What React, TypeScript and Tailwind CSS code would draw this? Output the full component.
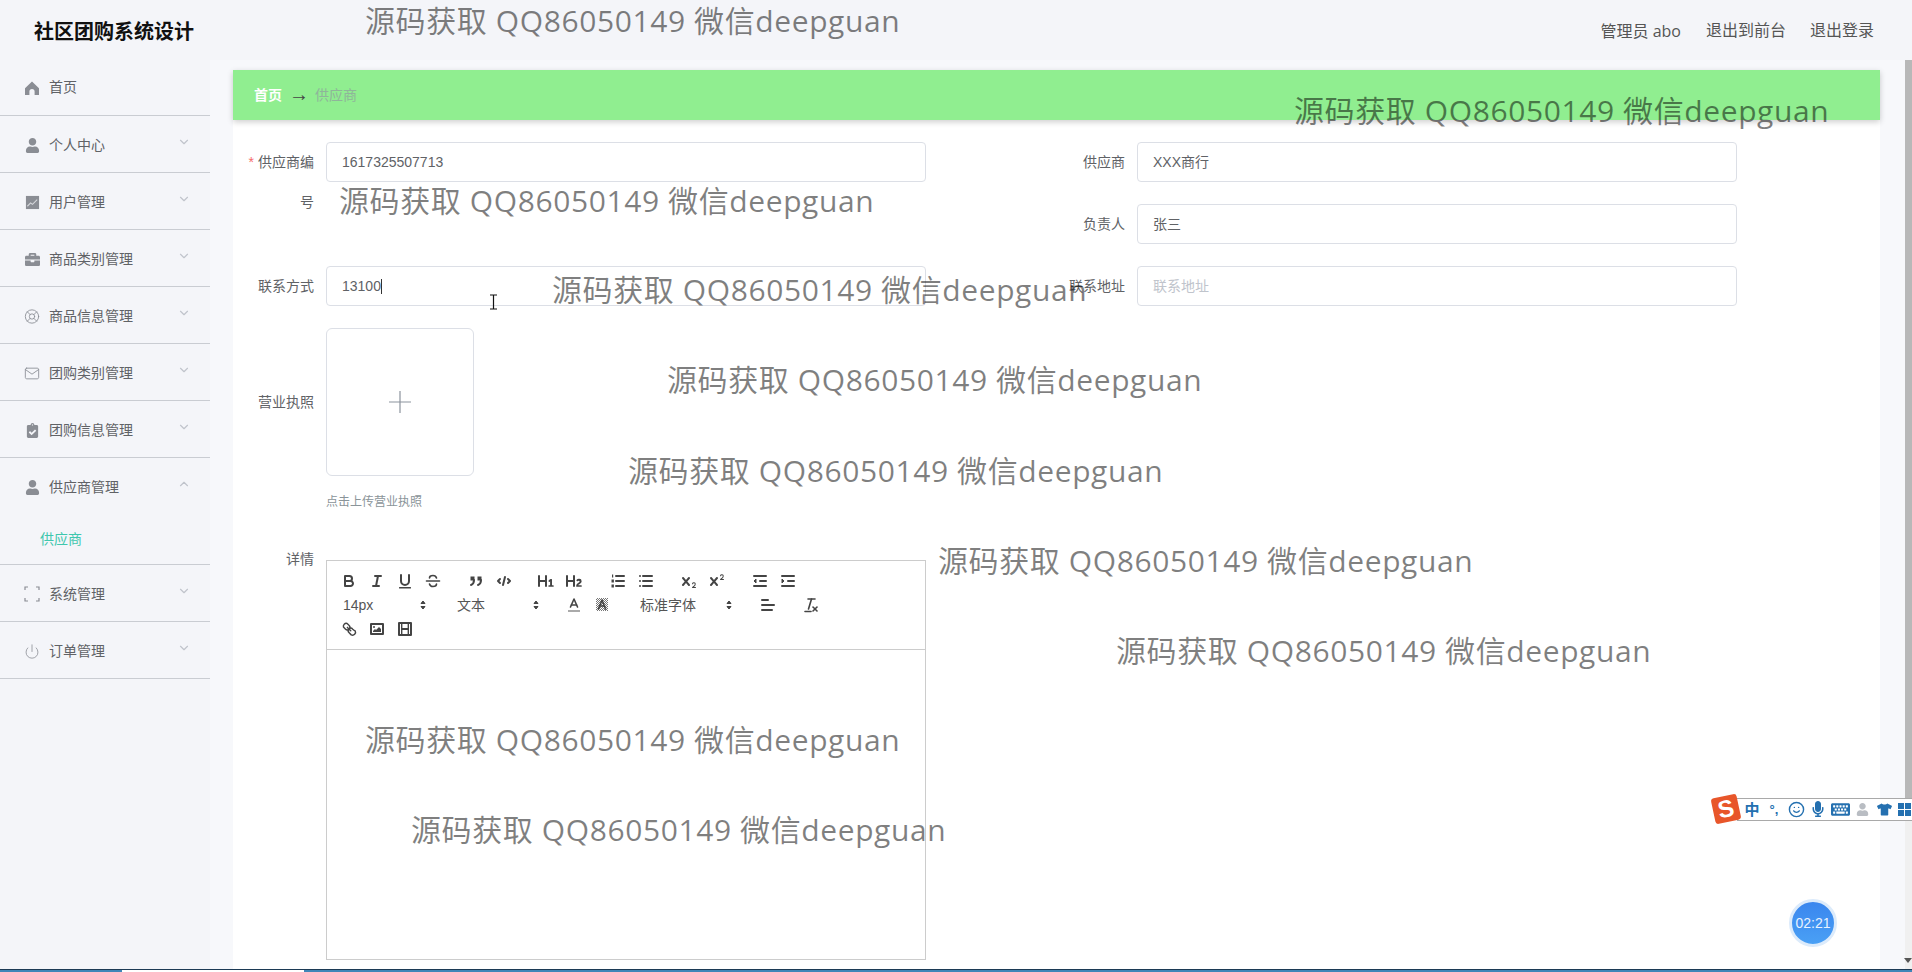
import type { ReactNode } from 'react';
import { LifeBuoy, Smile } from 'lucide-react';
import { FaBriefcase, FaClipboardCheck, FaKeyboard, FaMicrophone, FaTshirt, FaUser } from 'react-icons/fa';
import { FiChevronDown, FiChevronUp, FiMail, FiPower } from 'react-icons/fi';

const font = "font-['Liberation_Sans','Noto_Sans_CJK_SC',sans-serif]";

const watermarks = [
  'left-[365px] top-[0px]',
  'left-[1294px] top-[90px]',
  'left-[339px] top-[180px]',
  'left-[552px] top-[269px]',
  'left-[667px] top-[359px]',
  'left-[628px] top-[450px]',
  'left-[938px] top-[540px]',
  'left-[1116px] top-[630px]',
  'left-[365px] top-[719px]',
  'left-[411px] top-[809px]',
];

function Corners() {
  return (
    <svg viewBox="0 0 16 16" className="h-[16px] w-[16px]" fill="none" stroke="#8a8d94" strokeWidth="1.2">
      <path d="M1 4V1h3M12 1h3v3M1 12v3h3M15 12v3h-3" />
    </svg>
  );
}

function HomeIcon() {
  return (
    <svg viewBox="0 0 16 16" className="h-[16px] w-[16px]" fill="#8a8d94">
      <path d="M8 1.5 15 8.2V15h-4.4v-3.4a2.6 2.6 0 0 0-5.2 0V15H1V8.2Z" />
    </svg>
  );
}

function ChartIcon() {
  return (
    <svg viewBox="0 0 16 16" className="h-[15px] w-[15px]">
      <rect x="1" y="1" width="14" height="14" fill="#8a8d94" />
      <path d="M2.5 12 6 8.5l2 1.5 5-5" fill="none" stroke="#d5d7db" strokeWidth="1.2" />
    </svg>
  );
}

const menu: Array<[string, ReactNode]> = [
  ['个人中心', <FaUser size={15} />],
  ['用户管理', <ChartIcon />],
  ['商品类别管理', <FaBriefcase size={15} />],
  ['商品信息管理', <LifeBuoy size={17} strokeWidth={1.3} />],
  ['团购类别管理', <FiMail size={17} strokeWidth={1.3} />],
  ['团购信息管理', <FaClipboardCheck size={15} />],
];

const menuAfter: Array<[string, ReactNode]> = [
  ['系统管理', <Corners />],
  ['订单管理', <FiPower size={17} strokeWidth={1.2} />],
];

function MenuRow({ label, icon, open }: { label: string; icon: ReactNode; open?: boolean }) {
  return (
    <div className="flex h-[56px] items-center pl-[24px] pr-[19px] pt-[2px] text-[#606266]">
      <span className="flex w-[16px] justify-center text-[#8a8d94]">{icon}</span>
      <span className="ml-[9px] flex-1 text-[14px]">{label}</span>
      <span className="-mt-[7px] text-[#c0c4cc]">{open ? <FiChevronUp size={14} /> : <FiChevronDown size={14} />}</span>
    </div>
  );
}

function Sidebar() {
  return (
    <aside className="w-[210px] shrink-0">
      <div className="flex h-[58px] items-center border-b border-[#c9ccd2] pl-[24px] pt-[2px] text-[#606266]">
        <HomeIcon />
        <span className="ml-[9px] text-[14px]">首页</span>
      </div>
      {menu.map(([label, icon]) => (
        <div className="border-b border-[#c9ccd2]" key={label}>
          <MenuRow label={label} icon={icon} />
        </div>
      ))}
      <div className="border-b border-[#c9ccd2]">
        <MenuRow label="供应商管理" icon={<FaUser size={15} />} open />
        <div className="flex h-[50px] items-center pl-[40px] text-[14px] text-[#3fc7ae]">供应商</div>
      </div>
      {menuAfter.map(([label, icon]) => (
        <div className="border-b border-[#c9ccd2]" key={label}>
          <MenuRow label={label} icon={icon} />
        </div>
      ))}
    </aside>
  );
}

function Field({ label, value, placeholder, required, caret }: { label: string; value?: string; placeholder?: string; required?: boolean; caret?: boolean }) {
  return (
    <div className="flex">
      <label className="w-[80px] shrink-0 pr-[12px] text-right text-[14px] leading-[40px] text-[#606266]">
        {required && <span className="mr-[4px] text-[#f56c6c]">*</span>}
        {label}
      </label>
      <div className="flex h-[40px] w-[600px] items-center rounded-[4px] border border-[#dcdfe6] bg-white px-[15px] text-[14px] text-[#606266]">
        {value}
        {caret && <span className="h-[15px] w-px bg-[#333]" />}
        {placeholder && <span className="text-[#c0c4cc]">{placeholder}</span>}
      </div>
    </div>
  );
}

const stroke = { fill: 'none', stroke: '#444', strokeWidth: 2, strokeLinecap: 'round' as const, strokeLinejoin: 'round' as const };

function Q({ children }: { children: ReactNode }) {
  return (
    <span className="flex h-[24px] w-[28px] shrink-0 items-center justify-center">
      <svg viewBox="0 0 18 18" className="h-[18px] w-[18px]">{children}</svg>
    </span>
  );
}

function Picker({ label, width }: { label: string; width: string }) {
  return (
    <span className={`relative flex h-[24px] shrink-0 items-center pl-[8px] text-[14px] text-[#555] ${width}`}>
      {label}
      <svg viewBox="0 0 18 18" className="absolute right-[2px] top-[3px] h-[18px] w-[18px]" fill="#444" stroke="#444" strokeWidth="1" strokeLinejoin="round">
        <polygon points="7 10.5 9 13 11 10.5" />
        <polygon points="7 7.5 9 5 11 7.5" />
      </svg>
    </span>
  );
}

function Toolbar() {
  return (
    <div className="h-[89px] border-b border-[#ccc] px-[8px] pt-[8px]">
      <div className="flex">
        <Q><g {...stroke}><path d="M5,4H9.5A2.5,2.5,0,0,1,12,6.5v0A2.5,2.5,0,0,1,9.5,9H5V4Z" /><path d="M5,9h5.5A2.5,2.5,0,0,1,13,11.5v0A2.5,2.5,0,0,1,10.5,14H5V9Z" /></g></Q>
        <Q><g {...stroke}><line x1="7" x2="13" y1="4" y2="4" /><line x1="5" x2="11" y1="14" y2="14" /><line x1="8" x2="10" y1="14" y2="4" /></g></Q>
        <Q><path d="M5,3V9a4,4,0,0,0,8,0V3" {...stroke} /><rect height="1.6" rx=".5" width="12" x="3" y="15" fill="#444" /></Q>
        <Q><g {...stroke} strokeWidth="1.6"><line x1="2.5" x2="15.5" y1="9" y2="9" /><path d="M12.5 6C12 4 10.5 3.5 9 3.5 7 3.5 5.5 4.5 5.5 6M5.5 12c.5 2 2 2.5 3.5 2.5 2 0 3.5-1 3.5-2.5" /></g></Q>
        <span className="w-[15px]" />
        <Q><rect height="3" width="3" x="4" y="5" fill="#444" stroke="#444" /><rect height="3" width="3" x="11" y="5" fill="#444" stroke="#444" /><path d="M7,8c0,4-3,5-3,5" {...stroke} /><path d="M14,8c0,4-3,5-3,5" {...stroke} /></Q>
        <Q><g {...stroke}><polyline points="5 7 3 9 5 11" /><polyline points="13 7 15 9 13 11" /><line x1="10" x2="8" y1="5" y2="13" /></g></Q>
        <span className="w-[14px]" />
        <Q><path fill="#444" d="M10,4V14a1,1,0,0,1-2,0V10H3v4a1,1,0,0,1-2,0V4A1,1,0,0,1,3,4V8H8V4a1,1,0,0,1,2,0Zm6.06787,9.209H14.98975V7.59863a.54085.54085,0,0,0-.605-.60547h-.62744a1.01119,1.01119,0,0,0-.748.29688L11.645,8.56641a.5435.5435,0,0,0-.022.8584l.28613.30762a.53861.53861,0,0,0,.84717.0332l.09912-.08789a1.2137,1.2137,0,0,0,.2417-.35254h.02246s-.01123.30859-.01123.60547V13.209H12.041a.54085.54085,0,0,0-.605.60547v.43945a.54085.54085,0,0,0,.605.60547h4.02686a.54085.54085,0,0,0,.605-.60547v-.43945A.54085.54085,0,0,0,16.06787,13.209Z" /></Q>
        <Q><path fill="#444" d="M16.73975,13.81445v.43945a.54085.54085,0,0,1-.605.60547H11.855a.58392.58392,0,0,1-.64893-.60547V14.0127c0-2.90527,3.39941-3.42187,3.39941-4.55469a.77675.77675,0,0,0-.84717-.78125,1.17684,1.17684,0,0,0-.83594.38477c-.2749.26367-.561.374-.85791.13184l-.4292-.34082c-.30811-.24219-.38525-.51758-.1543-.81445a2.97155,2.97155,0,0,1,2.45361-1.17676,2.45393,2.45393,0,0,1,2.68408,2.40918c0,2.45312-3.1792,2.92676-3.27832,3.93848h2.79443A.54085.54085,0,0,1,16.73975,13.81445ZM9,3A.99974.99974,0,0,0,8,4V8H3V4A1,1,0,0,0,1,4V14a1,1,0,0,0,2,0V10H8v4a1,1,0,0,0,2,0V4A.99974.99974,0,0,0,9,3Z" /></Q>
        <span className="w-[16px]" />
        <Q><g {...stroke}><line x1="7" x2="15" y1="4" y2="4" /><line x1="7" x2="15" y1="9" y2="9" /><line x1="7" x2="15" y1="14" y2="14" /></g><g fill="#444"><rect x="3" y="2.5" width="1.2" height="3" /><rect x="2.5" y="7.5" width="2.4" height="3" /><rect x="2.5" y="12.5" width="2.4" height="3" /></g></Q>
        <Q><g {...stroke}><line x1="6" x2="15" y1="4" y2="4" /><line x1="6" x2="15" y1="9" y2="9" /><line x1="6" x2="15" y1="14" y2="14" /><line x1="3" x2="3" y1="4" y2="4" /><line x1="3" x2="3" y1="9" y2="9" /><line x1="3" x2="3" y1="14" y2="14" /></g></Q>
        <span className="w-[15px]" />
        <Q><path fill="#444" d="M15.5,15H13.861a3.858,3.858,0,0,0,1.914-2.975,1.8,1.8,0,0,0-1.6-1.751A1.921,1.921,0,0,0,12.021,11.7a0.50013,0.50013,0,1,0,.957.291h0a0.914,0.914,0,0,1,1.053-.725,0.81,0.81,0,0,1,.744.762c0,1.076-1.16971,1.86982-1.93971,2.43082A1.45639,1.45639,0,0,0,12,15.5a0.5,0.5,0,0,0,.5.5h3A0.5,0.5,0,0,0,15.5,15Z" /><path fill="#444" d="M9.65,5.241a1,1,0,0,0-1.409.108L6,7.964,3.759,5.349A1,1,0,0,0,2.192,6.59178Q2.2,6.601,2.241,6.651L4.684,9.5,2.241,12.35A1,1,0,0,0,3.71,13.70722q0.02557-.02768.049-0.05722L6,11.036,8.241,13.65a1,1,0,1,0,1.567-1.24277Q9.8,12.399,9.759,12.35L7.316,9.5,9.759,6.651A1,1,0,0,0,9.65,5.241Z" /></Q>
        <Q><path fill="#444" d="M15.5,7H13.861a4.015,4.015,0,0,0,1.914-2.975,1.8,1.8,0,0,0-1.6-1.751A1.922,1.922,0,0,0,12.021,3.7a0.5,0.5,0,1,0,.957.291,0.917,0.917,0,0,1,1.053-.725,0.81,0.81,0,0,1,.744.762c0,1.077-1.164,1.925-1.934,2.486A1.423,1.423,0,0,0,12,7.5a0.5,0.5,0,0,0,.5.5h3A0.5,0.5,0,0,0,15.5,7Z" /><path fill="#444" d="M9.65,5.241a1,1,0,0,0-1.409.108L6,7.964,3.759,5.349A1,1,0,0,0,2.192,6.59178Q2.2,6.601,2.241,6.651L4.684,9.5,2.241,12.35A1,1,0,0,0,3.71,13.70722q0.02557-.02768.049-0.05722L6,11.036,8.241,13.65a1,1,0,1,0,1.567-1.24277Q9.8,12.399,9.759,12.35L7.316,9.5,9.759,6.651A1,1,0,0,0,9.65,5.241Z" /></Q>
        <span className="w-[15px]" />
        <Q><g {...stroke}><line x1="3" x2="15" y1="14" y2="14" /><line x1="3" x2="15" y1="4" y2="4" /><line x1="9" x2="15" y1="9" y2="9" /></g><polygon fill="#444" stroke="#444" points="3 7 3 11 5 9 3 7" transform="matrix(-1 0 0 1 8 0)" /></Q>
        <Q><g {...stroke}><line x1="3" x2="15" y1="14" y2="14" /><line x1="3" x2="15" y1="4" y2="4" /><line x1="9" x2="15" y1="9" y2="9" /></g><polygon fill="#444" stroke="#444" points="3 7 3 11 5 9 3 7" /></Q>
      </div>
      <div className="flex">
        <Picker label="14px" width="w-[99px]" />
        <span className="w-[15px]" />
        <Picker label="文本" width="w-[98px]" />
        <span className="w-[13px]" />
        <Q><g {...stroke} strokeWidth="1.6"><polyline points="5.5 11 9 3 12.5 11" /><line x1="11.6" x2="6.4" y1="9" y2="9" /></g><line x1="3" x2="15" y1="15" y2="15" stroke="#aaa" strokeWidth="2" /></Q>
        <Q>
          <defs>
            <pattern id="hatch" width="2" height="2" patternUnits="userSpaceOnUse">
              <rect width="1" height="1" fill="#777" />
              <rect x="1" y="1" width="1" height="1" fill="#777" />
            </pattern>
          </defs>
          <rect x="3" y="2" width="12" height="13" fill="url(#hatch)" />
          <g {...stroke} strokeWidth="1.6"><polyline points="5.5 13 9 4 12.5 13" /><line x1="11.6" x2="6.4" y1="10" y2="10" /></g>
        </Q>
        <span className="w-[16px]" />
        <Picker label="标准字体" width="w-[108px]" />
        <span className="w-[14px]" />
        <Q><g {...stroke}><line x1="3" x2="15" y1="9" y2="9" /><line x1="3" x2="13" y1="14" y2="14" /><line x1="3" x2="9" y1="4" y2="4" /></g></Q>
        <span className="w-[15px]" />
        <Q><g {...stroke} strokeWidth="1.6"><line x1="6" x2="13" y1="3" y2="3" /><line x1="3" x2="9" y1="15.5" y2="15.5" /><line x1="9.5" x2="6.5" y1="3" y2="13" /><line x1="11" x2="15" y1="11" y2="15" /><line x1="15" x2="11" y1="11" y2="15" /></g></Q>
      </div>
      <div className="flex">
        <Q><g {...stroke} strokeWidth="1.7" transform="translate(1.5 1.5) scale(.84)"><line x1="7" x2="11" y1="7" y2="11" /><path d="M8.9,4.577a3.476,3.476,0,0,1,.36,4.679A3.476,3.476,0,0,1,4.577,8.9C3.185,7.5,2.35,6.65,2.35,6.65A3.476,3.476,0,0,1,6.65,2.35S7.5,3.185,8.9,4.577Z" /><path d="M13.423,9.1a3.476,3.476,0,0,0-4.679-.36,3.476,3.476,0,0,0,.36,4.679c1.392,1.392,2.5,2.5,2.5,2.5a3.476,3.476,0,0,0,4.679-4.679S14.815,10.5,13.423,9.1Z" /></g></Q>
        <Q><rect {...stroke} height="10" width="12" x="3" y="4" /><circle fill="#444" cx="6" cy="7" r="1" /><polyline fill="#444" points="5 12 5 11 7 9 8 10 11 7 13 9 13 12 5 12" /></Q>
        <Q><rect {...stroke} height="12" width="12" x="3" y="3" /><rect fill="#444" height="12" width="1.4" x="5" y="3" /><rect fill="#444" height="12" width="1.4" x="11.6" y="3" /><rect fill="#444" height="2" width="7" x="5" y="8" /></Q>
      </div>
    </div>
  );
}

function ImeIcon({ children }: { children: ReactNode }) {
  return <span className="flex w-[22px] shrink-0 items-center justify-center">{children}</span>;
}

function ImeBar() {
  return (
    <div className="absolute left-[1713px] top-[796px] flex items-center">
      <span className="z-10 flex h-[26px] w-[26px] -rotate-12 items-center justify-center rounded-[3px] bg-[#e8562a] text-[24px] font-black leading-none text-white">S</span>
      <div className="-ml-[2px] flex h-[23px] w-[176px] items-center overflow-hidden border-y border-[#a9a9a9] bg-white pl-[4px] text-[#2470b0]">
        <ImeIcon><span className="text-[15px] font-bold leading-none">中</span></ImeIcon>
        <ImeIcon><span className="text-[13px] font-bold leading-none">°,</span></ImeIcon>
        <ImeIcon><Smile size={17} strokeWidth={2} /></ImeIcon>
        <ImeIcon><FaMicrophone size={16} /></ImeIcon>
        <ImeIcon><FaKeyboard size={19} /></ImeIcon>
        <ImeIcon><FaUser size={13} className="text-[#b9bdc3]" /></ImeIcon>
        <ImeIcon><FaTshirt size={15} /></ImeIcon>
        <span className="ml-[3px] grid shrink-0 grid-cols-2 gap-px">
          <span className="h-[6px] w-[6px] bg-[#2470b0]" />
          <span className="h-[6px] w-[6px] bg-[#2470b0]" />
          <span className="h-[6px] w-[6px] bg-[#2470b0]" />
          <span className="h-[6px] w-[6px] bg-[#2470b0]" />
        </span>
      </div>
    </div>
  );
}

export default function App() {
  return (
    <div className={`relative flex h-[972px] w-[1912px] flex-col overflow-hidden bg-[#f4f5f9] ${font}`}>
      <header className="flex h-[58px] shrink-0 items-center justify-between pl-[34px] pr-[38px]">
        <span className="mt-[5px] text-[20px] font-bold text-[#111]">社区团购系统设计</span>
        <div className="mt-[3px] flex gap-[24px] text-[16px] text-[#555]">
          <span className="mr-[1px] font-['Open_Sans','Noto_Sans_CJK_SC',sans-serif]">管理员 abo</span>
          <span>退出到前台</span>
          <span>退出登录</span>
        </div>
      </header>

      <div className="flex min-h-0 flex-1">
        <Sidebar />
        <div className="mt-[2px] w-[23px] shrink-0 bg-[#f7f8fb]" />
        <main className="mt-[2px] flex w-[1647px] flex-col bg-[#f7f8fb]">
          <div className="relative z-10 mt-[10px] flex h-[50px] shrink-0 items-center bg-[#90ee90] pl-[21px] text-[14px] shadow-[0_2px_6px_rgba(0,0,0,0.2)]">
            <span className="font-bold text-white">首页</span>
            <span className="-mt-[3px] ml-[7px] mr-[6px] text-[20px] leading-none text-[#444]">→</span>
            <span className="text-[#8fb59a]">供应商</span>
          </div>

          <div className="flex flex-1 bg-white pl-[13px] pt-[22px]">
            <div className="w-[811px] shrink-0">
              <div className="h-[124px]">
                <Field label="供应商编号" value="1617325507713" required />
              </div>
              <Field label="联系方式" value="13100" caret />
              <div className="mt-[22px] flex">
                <label className="w-[80px] shrink-0 pr-[12px] text-right text-[14px] leading-[148px] text-[#606266]">营业执照</label>
                <div>
                  <div className="flex h-[148px] w-[148px] items-center justify-center rounded-[6px] border border-[#dcdfe6]">
                    <svg viewBox="0 0 24 24" className="h-[24px] w-[24px]" stroke="#8c939d" strokeWidth="1.2"><path d="M12 1v22M1 12h22" /></svg>
                  </div>
                  <p className="mt-[19px] text-[12px] leading-[14px] text-[#8a9499]">点击上传营业执照</p>
                </div>
              </div>
              <div className="mt-[51px] flex">
                <label className="-mt-[21px] w-[80px] shrink-0 pr-[12px] text-right text-[14px] leading-[40px] text-[#606266]">详情</label>
                <div className="h-[400px] w-[600px] border border-[#ccc]">
                  <Toolbar />
                </div>
              </div>
            </div>
            <div className="flex flex-col gap-[22px]">
              <Field label="供应商" value="XXX商行" />
              <Field label="负责人" value="张三" />
              <Field label="联系地址" placeholder="联系地址" />
            </div>
          </div>
        </main>
        <div className="mt-[2px] w-[25px] shrink-0 bg-[#f7f8fb]" />
        <div className="mt-[2px] flex w-[7px] flex-col justify-between bg-[#f0f0f0]">
          <div className="h-[738px] bg-[#b8b8b8]" />
          <div className="mb-[6px] h-0 w-0 self-end border-x-[4px] border-t-[5px] border-x-transparent border-t-[#555]" />
        </div>
      </div>

      <div className="flex h-[3px] shrink-0 border-t border-[#1c3a55] bg-[#3f86b8]">
        <span className="ml-[122px] w-[182px] bg-white" />
      </div>

      {watermarks.map((pos) => (
        <span className={`pointer-events-none absolute z-20 whitespace-nowrap text-[30px] leading-[42px] tracking-[0.6px] text-black/50 font-['Open_Sans','Noto_Sans_CJK_SC',sans-serif] ${pos}`} key={pos}>
          源码获取 QQ86050149 微信deepguan
        </span>
      ))}

      <svg viewBox="0 0 9 16" className="absolute left-[489px] top-[294px] z-20 h-[16px] w-[9px]" fill="none" stroke="#111" strokeWidth="1.2">
        <path d="M1 1h7M1 15h7M4.5 1v14" />
      </svg>

      <ImeBar />

      <div className="absolute left-[1789px] top-[899px] flex h-[48px] w-[48px] items-center justify-center rounded-full border-[3px] border-[#dcebfb] bg-gradient-to-b from-[#3a86ee] to-[#4aa0f5] text-[14px] text-[#e8f2ff]">02:21</div>
    </div>
  );
}
